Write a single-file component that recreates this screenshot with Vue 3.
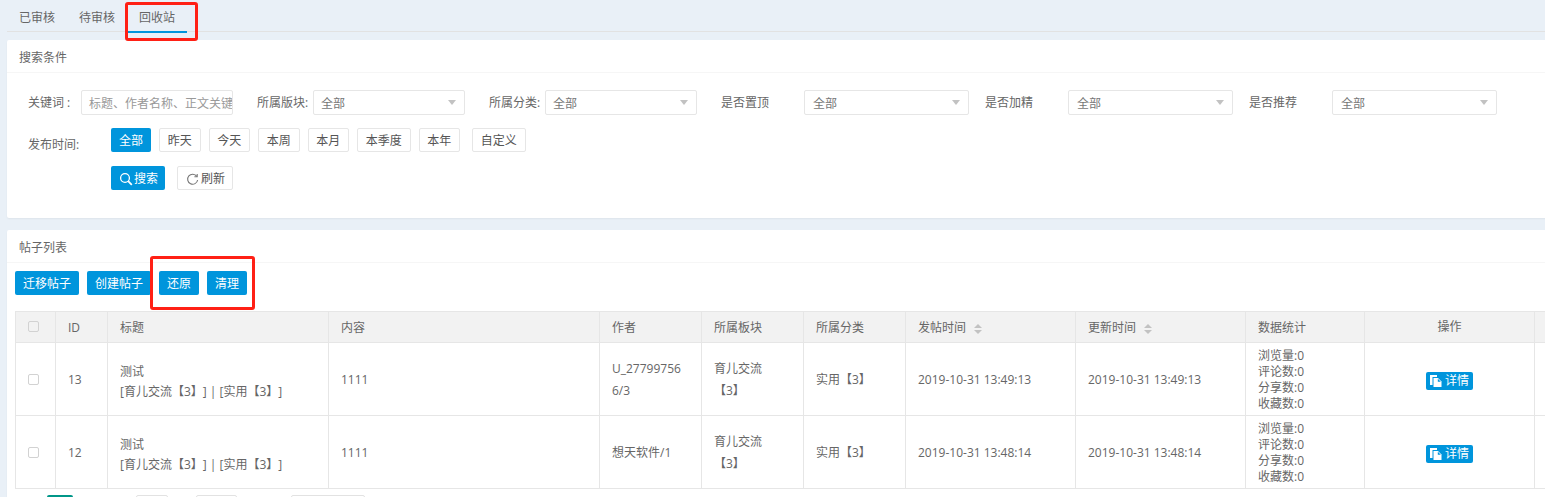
<script setup>
const tabs = ['已审核', '待审核', '回收站']
const selects = [
  { label: '所属版块:', cls: 'f-block' },
  { label: '所属分类:', cls: 'f-cate' },
  { label: '是否置顶', cls: 'f-wide' },
  { label: '是否加精', cls: 'f-wide' },
  { label: '是否推荐', cls: 'f-wide' }
]
const ranges = ['全部', '昨天', '今天', '本周', '本月', '本季度', '本年', '自定义']
const columns = [40, 52, 221, 271, 102, 102, 102, 170, 170, 119, 170, 40]
const stats = ['浏览量:0', '评论数:0', '分享数:0', '收藏数:0']
const rows = [
  { id: 13, author: ['U_27799756', '6/3'], created: '2019-10-31 13:49:13' },
  { id: 12, author: ['想天软件/1'], created: '2019-10-31 13:48:14' }
]
</script>

<template>
  <div class="page">
    <div class="tabs">
      <span v-for="(t, i) in tabs" :key="t" class="tab" :class="{ active: i === 2 }">{{ t }}</span>
    </div>

    <section class="card search-card">
      <div class="card-head">搜索条件</div>
      <div class="form">
        <div class="filters">
          <label class="f-label f-key">关键词 :</label>
          <div class="input">标题、作者名称、正文关键字</div>
          <template v-for="s in selects" :key="s.label">
            <label class="f-label" :class="s.cls">{{ s.label }}</label>
            <div class="select" :class="s.cls">
              <span>全部</span>
              <i class="caret"></i>
            </div>
          </template>
        </div>
        <div class="time-row">
          <label class="f-label f-time">发布时间:</label>
          <div class="ranges">
            <button v-for="(r, i) in ranges" :key="r" class="range" :class="{ on: i === 0 }">{{ r }}</button>
          </div>
        </div>
        <div class="action-row">
          <button class="btn search-btn">
            <svg width="14" height="14" viewBox="0 0 14 14" fill="none" stroke="#fff" stroke-width="1.3">
              <circle cx="6" cy="6" r="4.4" />
              <path d="M9.2 9.2l3.6 3.6" stroke-width="1.8" />
            </svg>搜索
          </button>
          <button class="range refresh-btn">
            <svg width="13" height="13" viewBox="0 0 13 13" fill="none" stroke="#777" stroke-width="1.1">
              <path d="M10.8 3.4A5 5 0 1 0 11.6 7" />
              <path d="M11.2 1v2.8H8.4" />
            </svg>刷新
          </button>
        </div>
      </div>
    </section>

    <section class="card list-card">
      <div class="card-head">帖子列表</div>
      <div class="list-body">
        <div class="toolbar">
          <button class="btn">迁移帖子</button>
          <button class="btn">创建帖子</button>
          <button class="btn">还原</button>
          <button class="btn">清理</button>
        </div>
        <table class="grid">
          <colgroup>
            <col v-for="(w, i) in columns" :key="i" :style="{ width: w + 'px' }" />
          </colgroup>
          <thead>
            <tr>
              <th class="center"><i class="check"></i></th>
              <th>ID</th>
              <th>标题</th>
              <th>内容</th>
              <th>作者</th>
              <th>所属板块</th>
              <th>所属分类</th>
              <th>发帖时间<span class="sort"><i></i><i></i></span></th>
              <th>更新时间<span class="sort"><i></i><i></i></span></th>
              <th>数据统计</th>
              <th class="center">操作</th>
              <th></th>
            </tr>
          </thead>
          <tbody>
            <tr v-for="r in rows" :key="r.id">
              <td class="center"><i class="check"></i></td>
              <td>{{ r.id }}</td>
              <td class="title-cell">测试<br />[育儿交流【3】] | [实用【3】]</td>
              <td>1111</td>
              <td class="wrap-cell">
                <div v-for="line in r.author" :key="line">{{ line }}</div>
              </td>
              <td class="wrap-cell">育儿交流<br />【3】</td>
              <td>实用【3】</td>
              <td>{{ r.created }}</td>
              <td>{{ r.created }}</td>
              <td class="stats-cell">
                <div v-for="s in stats" :key="s">{{ s }}</div>
              </td>
              <td class="center">
                <span class="detail">
                  <svg width="14" height="14" viewBox="0 0 14 14">
                    <path fill="#fff" d="M1 1h7v2H3.5v8H1z" />
                    <path fill="#fff" d="M4.5 4H9l3.5 3.5V13h-8z" />
                    <path fill="#0095dc" d="M8.8 4.8v3h3z" />
                  </svg>详情
                </span>
              </td>
              <td></td>
            </tr>
          </tbody>
        </table>
        <div class="pager">
          <span class="pg pg-on"></span>
          <span class="pg pg-a"></span>
          <span class="pg pg-b"></span>
          <span class="pg pg-c"></span>
        </div>
      </div>
    </section>

    <div class="mark mark-tab"></div>
    <div class="mark mark-tools"></div>
  </div>
</template>

<style scoped>
.page {
  position: relative;
  width: 1545px;
  height: 497px;
  overflow: hidden;
  padding-left: 7px;
  box-sizing: border-box;
  background: #e9f0f7;
  color: #666;
  font: 12px/1.5 "Open Sans", "Noto Sans CJK SC", sans-serif;
  text-spacing-trim: space-all;
}
.tabs {
  display: flex;
  height: 31px;
  border-bottom: 1px solid #e2e2e2;
  margin-bottom: 8px;
  width: 1600px;
}
.tab {
  position: relative;
  width: 60px;
  padding-top: 9px;
  text-align: center;
}
.tab.active::after {
  content: '';
  position: absolute;
  left: 0;
  right: 0;
  top: 31px;
  height: 2px;
  background: #0095dc;
}
.card {
  width: 1600px;
  background: #fff;
  border-radius: 2px;
  box-shadow: 0 1px 2px rgba(0, 0, 0, 0.05);
}
.search-card {
  height: 178px;
  margin-bottom: 12px;
}
.card-head {
  height: 32px;
  line-height: 35px;
  padding-left: 12px;
  border-bottom: 1px solid #f6f6f6;
}
.form {
  padding: 17px 0 0 21px;
}
.filters {
  display: flex;
  align-items: center;
  height: 25px;
}
.f-label {
  flex: none;
  padding-top: 1px;
}
.f-label.f-key { width: 53px; }
.f-label.f-block { width: 56px; margin-left: 24px; }
.f-label.f-cate { width: 56px; margin-left: 24px; }
.f-label.f-wide { width: 83px; margin-left: 24px; }
.select.f-wide + .f-label.f-wide { margin-left: 16px; }
.input, .select {
  box-sizing: border-box;
  flex: none;
  width: 152px;
  height: 25px;
  line-height: 25px;
  border: 1px solid #e6e6e6;
  border-radius: 2px;
  padding-left: 7px;
  background: #fff;
  overflow: hidden;
  white-space: nowrap;
}
.input { color: #999; }
.select {
  position: relative;
  color: #777;
}
.select.f-wide {
  width: 165px;
  padding-left: 8px;
}
.caret {
  position: absolute;
  right: 8px;
  top: 9px;
  border: 4.5px solid transparent;
  border-top: 5px solid #c2c2c2;
  border-bottom: 0;
}
.time-row {
  display: flex;
  height: 24px;
  margin-top: 13px;
}
.f-time {
  width: 83px;
  padding-top: 8px;
}
.ranges {
  display: flex;
  gap: 8px;
}
.range, .btn {
  font: inherit;
  height: 24px;
  padding: 2px 7.75px 0;
  border-radius: 2px;
  box-sizing: border-box;
  white-space: nowrap;
  cursor: pointer;
}
.range {
  border: 1px solid #e6e6e6;
  background: #fff;
  color: #555;
  width: auto;
}
.ranges .range:last-child { margin-left: 4px; }
.range.on {
  border: 0;
  padding: 2px 8px 0;
  background: #0095dc;
  color: #fff;
}
.btn {
  border: 0;
  padding: 2px 8px 0;
  background: #0095dc;
  color: #fff;
  display: inline-flex;
  align-items: center;
}
.action-row {
  display: flex;
  gap: 12px;
  margin: 14px 0 0 83px;
}
.search-btn {
  width: 54px;
  padding: 2px 0 0 8px;
}
.search-btn svg { margin-right: 1px; }
.refresh-btn {
  display: inline-flex;
  align-items: center;
  width: 56px;
  padding: 2px 0 0 8px;
}
.refresh-btn svg { margin-right: 2px; }
.list-body {
  padding: 8px 0 0 8px;
}
.toolbar {
  display: flex;
  gap: 8px;
  margin-bottom: 16px;
}
.grid {
  table-layout: fixed;
  width: 1559px;
  border-collapse: collapse;
  border: 1px solid #e6e6e6;
}
.grid th, .grid td {
  box-sizing: border-box;
  border: 1px solid #e6e6e6;
  padding: 2px 12px 0;
  text-align: left;
  font-weight: 400;
  overflow-wrap: anywhere;
}
.grid th {
  height: 31px;
  background: #f2f2f2;
}
.grid td {
  height: 73px;
}
.grid .center {
  text-align: center;
  padding: 0;
}
.title-cell {
  line-height: 20px;
}
.grid .title-cell {
  padding-top: 5px;
}
.wrap-cell {
  line-height: 22px;
}
.stats-cell {
  line-height: 16px;
}
.check {
  display: inline-block;
  box-sizing: border-box;
  width: 11px;
  height: 11px;
  margin-right: 4px;
  border: 1px solid #d2d2d2;
  border-radius: 2px;
  vertical-align: middle;
}
.grid th .check {
  margin-top: -2px;
}
.sort {
  display: inline-flex;
  flex-direction: column;
  gap: 2px;
  margin-left: 8px;
  vertical-align: middle;
}
.sort i {
  display: block;
  border-left: 4px solid transparent;
  border-right: 4px solid transparent;
  border-bottom: 4px solid #c2c2c2;
}
.sort i + i {
  border-bottom: 0;
  border-top: 4px solid #c2c2c2;
}
.detail {
  display: inline-flex;
  align-items: center;
  width: 47px;
  height: 18px;
  margin-top: 4px;
  box-sizing: border-box;
  padding-left: 3px;
  gap: 2px;
  border-radius: 2px;
  background: #0095dc;
  color: #fff;
  vertical-align: middle;
}
.pager {
  position: relative;
  display: flex;
  margin-top: 6px;
  padding-left: 32px;
}
.pg {
  box-sizing: border-box;
  height: 24px;
  border: 1px solid #e2e2e2;
  border-radius: 2px;
}
.pg-on {
  width: 26px;
  border: 0;
  background: #009688;
}
.pg-a { width: 32px; margin-left: 63px; }
.pg-b { width: 41px; margin-left: 28px; }
.pg-c { width: 74px; margin-left: 54px; }
.mark {
  position: absolute;
  box-sizing: border-box;
  border: 3px solid #ff2015;
  border-radius: 3px;
  pointer-events: none;
}
.mark-tab {
  left: 125px;
  top: 2px;
  width: 73px;
  height: 39px;
}
.mark-tools {
  left: 150px;
  top: 256px;
  width: 105px;
  height: 54px;
}
</style>

<style>
html, body {
  margin: 0;
  overflow: hidden;
}
</style>
